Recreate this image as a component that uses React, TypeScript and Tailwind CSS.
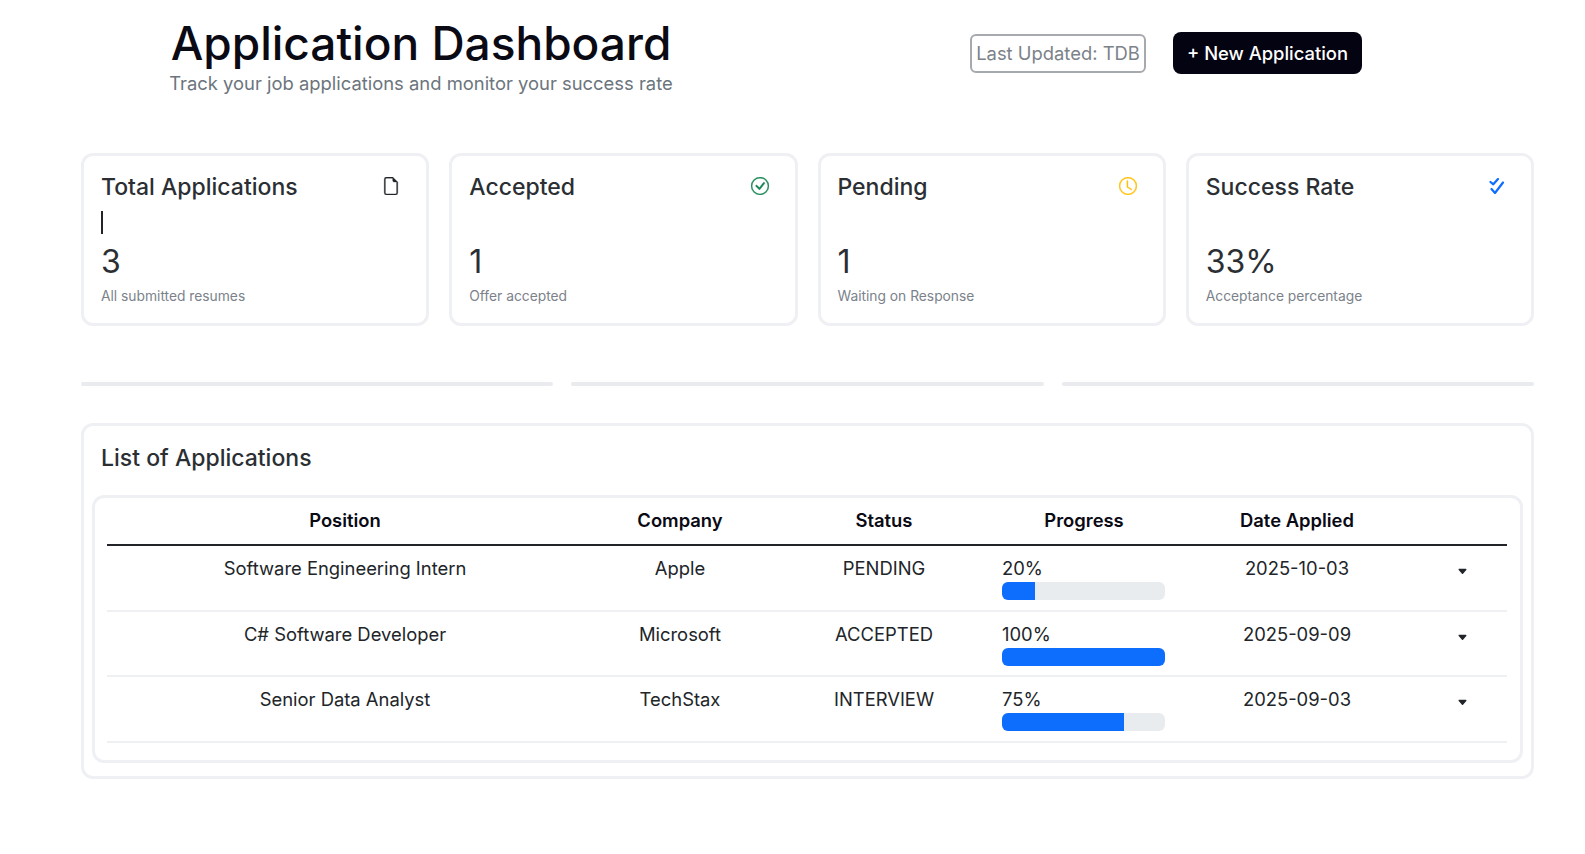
import { BsCaretDownFill, BsCheckCircle, BsClock, BsFileEarmark } from "react-icons/bs"

interface Application {
  position: string
  company: string
  status: string
  progress: number
  date: string
}

const applications: Application[] = [
  { position: "Software Engineering Intern", company: "Apple", status: "PENDING", progress: 20, date: "2025-10-03" },
  { position: "C# Software Developer", company: "Microsoft", status: "ACCEPTED", progress: 100, date: "2025-09-09" },
  { position: "Senior Data Analyst", company: "TechStax", status: "INTERVIEW", progress: 75, date: "2025-09-03" },
]

function StackedChecks() {
  return (
    <svg width="16" height="16" viewBox="0 0 16 16" fill="none" stroke="#0d6efd" strokeWidth="2.2" strokeLinecap="round" strokeLinejoin="round">
      <path d="M1.5 4L4.3 6.3L9 1" />
      <path d="M2.5 11L6 15L14 4.5" />
    </svg>
  )
}

function StatCard({ title, value, note, icon, caret }: { title: string; value: string; note: string; icon: React.ReactNode; caret?: boolean }) {
  return (
    <div className="h-[173px] rounded-xl border-[3px] border-[#eef0f3] bg-white px-[17px] pt-[15px]">
      <div className="flex h-[33px] items-center justify-between">
        <span className="text-[23px] font-medium leading-[33px] text-[#2b2f33]">{title}</span>
        <span className="mr-[9px] -mt-[3px] flex items-center">{icon}</span>
      </div>
      <div className="h-[24px] pt-[7px]">{caret && <div className="h-[23px] w-[2px] bg-[#212529]" />}</div>
      <div className="mt-[10px] text-[32px] leading-[48px] text-[#2b2f33]">{value}</div>
      <div className="text-[13.8px] leading-[20px] text-[#7b828a]">{note}</div>
    </div>
  )
}

export default function App() {
  return (
    <div className="min-h-[854px] bg-white pl-[81px] pr-[51px] font-['Inter',sans-serif]">
      <div className="flex h-[153px] items-start">
        <div className="ml-[88px] mt-[15px] w-[504px] text-center">
          <h1 className="whitespace-nowrap text-[46px] font-medium leading-[56px] text-[#0a0a14]">Application Dashboard</h1>
          <p className="whitespace-nowrap text-[18.4px] leading-[24px] text-[#6c757d]">Track your job applications and monitor your success rate</p>
        </div>
        <div className="ml-[297px] mt-[32px] flex items-center gap-[27px]">
          <div className="flex h-[39px] w-[176px] items-center justify-center whitespace-nowrap rounded-md border-2 border-[#a6a9ad] pt-[1px] text-[18.4px] text-[#7b828a]">
            Last Updated: TDB
          </div>
          <button className="h-[42px] w-[189px] rounded-lg bg-[#030312] pt-[1px] text-[18.4px] font-medium text-white">+ New Application</button>
        </div>
      </div>

      <div className="grid grid-cols-4 gap-[20px]">
        <StatCard title="Total Applications" value="3" note="All submitted resumes" caret icon={<BsFileEarmark size={18} strokeWidth={0.3} className="text-[#212529]" />} />
        <StatCard title="Accepted" value="1" note="Offer accepted" icon={<BsCheckCircle size={18} strokeWidth={0.3} className="text-[#198754]" />} />
        <StatCard title="Pending" value="1" note="Waiting on Response" icon={<BsClock size={18} strokeWidth={0.3} className="text-[#ffc107]" />} />
        <StatCard title="Success Rate" value="33%" note="Acceptance percentage" icon={<StackedChecks />} />
      </div>

      <div className="mt-[56px] grid grid-cols-3 gap-[18px]">
        <div className="h-[4px] rounded-full bg-[#e9ebef]" />
        <div className="h-[4px] rounded-full bg-[#e9ebef]" />
        <div className="h-[4px] rounded-full bg-[#e9ebef]" />
      </div>

      <div className="mt-[37px] h-[356px] rounded-xl border-[3px] border-[#eef0f3] bg-white px-[8px] pt-[16px]">
        <h2 className="pl-[9px] text-[23px] font-medium leading-[33px] text-[#2b2f33]">List of Applications</h2>
        <div className="mt-[20px] h-[268px] rounded-xl border-[3px] border-[#eef0f3] px-[12px]">
          <table className="w-[1400px] table-fixed border-collapse text-[18.4px] text-[#212529]">
            <colgroup>
              <col className="w-[476px]" />
              <col className="w-[194px]" />
              <col className="w-[214px]" />
              <col className="w-[186px]" />
              <col className="w-[240px]" />
              <col className="w-[90px]" />
            </colgroup>
            <thead>
              <tr className="h-[47px] border-b-2 border-[#212529] text-center text-[#0a0a14]">
                <th className="font-semibold">Position</th>
                <th className="font-semibold">Company</th>
                <th className="font-semibold">Status</th>
                <th className="font-semibold">Progress</th>
                <th className="font-semibold">Date Applied</th>
                <th />
              </tr>
            </thead>
            <tbody>
              {applications.map((app) => (
                <tr key={app.position} className="h-[66px] border-b-2 border-[#eef0f3] text-center align-top even:h-[65px]">
                  <td className="pt-[9px] leading-[27px]">{app.position}</td>
                  <td className="pt-[9px] leading-[27px]">{app.company}</td>
                  <td className="pt-[9px] leading-[27px]">{app.status}</td>
                  <td className="pl-[11px] pr-[12px] pt-[9px] text-left leading-[27px]">
                    {app.progress}%
                    <div className="h-[18px] overflow-hidden rounded-md bg-[#e9ecef]">
                      <div className="h-full bg-[#0d6efd]" style={{ width: `${app.progress}%` }} />
                    </div>
                  </td>
                  <td className="pt-[9px] leading-[27px]">{app.date}</td>
                  <td className="pt-[20px]">
                    <BsCaretDownFill size={11} className="mx-auto text-[#212529]" />
                  </td>
                </tr>
              ))}
            </tbody>
          </table>
        </div>
      </div>
    </div>
  )
}
